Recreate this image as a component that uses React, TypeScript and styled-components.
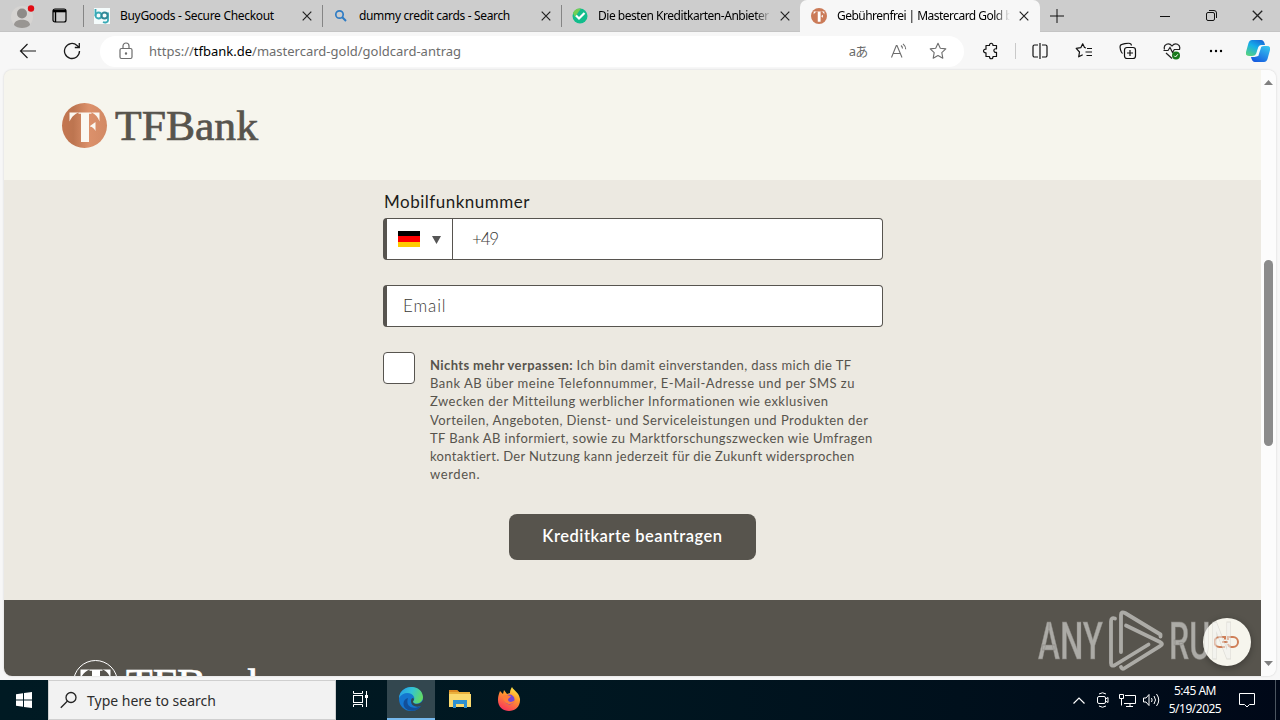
import React from "react";
import styled, { createGlobalStyle, css } from "styled-components";

const ui = `"Noto Sans", "Open Sans", "Noto Sans CJK JP", sans-serif`;
const brand = `Lato, "Open Sans", sans-serif`;

const GlobalStyle = createGlobalStyle`
    * {
        box-sizing: border-box;
    }
    body {
        margin: 0;
        overflow: hidden;
    }
    svg {
        display: block;
        flex-shrink: 0;
    }
`;

// --- Window ---
const Desktop = styled.div`
    width: 1280px;
    height: 720px;
    display: flex;
    flex-direction: column;
    overflow: hidden;
    background: #f7f7f7;
    font-family: ${ui};
    color: #1a1a1a;
`;

// --- Tab strip ---
const TabStrip = styled.div`
    height: 32px;
    flex-shrink: 0;
    display: flex;
    background: #cdcdcd;
    border-bottom: 1px solid #c4c4c4;
`;

const ProfileArea = styled.div`
    width: 83px;
    display: flex;
    align-items: center;
    gap: 16px;
    padding-left: 10px;
`;

const Tab = styled.div<{ $active?: boolean }>`
    width: 239px;
    height: 32px;
    display: flex;
    align-items: center;
    padding: 0 10px 0 10px;
    border-left: 1px solid #858585;
    border-image: linear-gradient(transparent 6px, #858585 6px, #858585 26px, transparent 26px) 1;

    ${({ $active }) =>
        $active &&
        css`
            width: 240px;
            padding-left: 11px;
            padding-right: 11px;
            background: #f7f7f7;
            border: none;
            border-radius: 7px 7px 0 0;
        `}
`;

const TabTitle = styled.span<{ $spacing: number; $fade?: boolean }>`
    flex: 1;
    margin: 0 9px 0 10px;
    overflow: hidden;
    white-space: nowrap;
    font-size: 12px;
    line-height: 20px;
    color: #000;
    letter-spacing: ${({ $spacing }) => $spacing}px;
    ${({ $fade }) => $fade && "mask-image: linear-gradient(90deg, #000 91%, transparent 100%);"}
`;

const NewTab = styled.div`
    width: 34px;
    display: flex;
    align-items: center;
    justify-content: center;
`;

const WindowButtons = styled.div`
    margin-left: auto;
    display: flex;
    align-items: center;
`;

const WindowButton = styled.div`
    width: 46px;
    display: flex;
    justify-content: center;
`;

// --- Toolbar ---
const Toolbar = styled.div`
    height: 38px;
    flex-shrink: 0;
    display: flex;
    align-items: center;
    background: #f7f7f7;
`;

const ToolButton = styled.div<{ $width?: number }>`
    width: ${({ $width = 44 }) => $width}px;
    flex-shrink: 0;
    display: flex;
    align-items: center;
    justify-content: center;
`;

const AddressBar = styled.div`
    width: 864px;
    height: 31px;
    display: flex;
    align-items: center;
    padding: 0 6px 0 17px;
    background: #fff;
    border-radius: 16px;
`;

const Url = styled.span`
    flex: 1;
    margin-left: 14px;
    font-size: 13px;
    line-height: 20px;
    color: #6d6d6d;

    b {
        font-weight: 400;
        color: #000;
    }
`;

const Translate = styled.span`
    font-size: 13px;
    font-weight: 400;
    line-height: 16px;
    letter-spacing: -1px;
    color: #6a6a6a;
`;

const Divider = styled.div`
    width: 1px;
    height: 16px;
    margin-right: 1px;
    background: #c9c9c9;
`;

// --- Page viewport ---
const Viewport = styled.div`
    height: 606px;
    flex-shrink: 0;
    margin: 0 4px;
    display: flex;
    overflow: hidden;
    border-radius: 8px;
    box-shadow: 0 0 2px #c8c8c8;
`;

const Page = styled.main`
    position: relative;
    width: 1257px;
    display: flex;
    flex-direction: column;
    background: #ece9e1;
    font-family: ${brand};
`;

const PageHeader = styled.header`
    height: 110px;
    flex-shrink: 0;
    padding: 31px 0 0 56px;
    background: #f6f5ed;
`;

const Form = styled.form`
    width: 500px;
    height: 420px;
    flex-shrink: 0;
    margin: 0 378px 0 379px;
    padding-top: 11px;
    display: flex;
    flex-direction: column;
`;

const FieldLabel = styled.label`
    height: 27px;
    padding-left: 1px;
    font-size: 17px;
    line-height: 22px;
    letter-spacing: 0.5px;
    color: #1c1c1a;
`;

const Field = styled.div`
    height: 42px;
    flex-shrink: 0;
    margin-bottom: 25px;
    display: flex;
    align-items: center;
    background: #fff;
    border: 1px solid #57544f;
    border-left-width: 4px;
    border-radius: 4px;
    font-size: 17px;
    font-weight: 300;
    color: #3a3936;
`;

const CountrySelect = styled.div`
    width: 66px;
    height: 40px;
    display: flex;
    align-items: center;
    gap: 12px;
    padding: 1px 0 0 11px;
    border-right: 1px solid #57544f;
`;

const Flag = styled.div`
    width: 22px;
    height: 16px;
    margin-bottom: 1px;
    background: linear-gradient(#000 33.3%, #f00 33.3%, #f00 66.6%, #fc0 66.6%);
`;

const Value = styled.span<{ $inset: number; $spacing: number }>`
    padding: 0 0 1px ${({ $inset }) => $inset}px;
    letter-spacing: ${({ $spacing }) => $spacing}px;
`;

const Consent = styled.div`
    display: flex;
    gap: 15px;
`;

const Checkbox = styled.div`
    width: 32px;
    height: 32px;
    flex-shrink: 0;
    background: #fff;
    border: 1px solid #57544f;
    border-radius: 4px;
`;

const ConsentText = styled.div`
    padding-top: 4px;
    color: #57544d;
`;

const ConsentLine = styled.div<{ $spacing: number }>`
    font-size: 13px;
    line-height: 18.2px;
    white-space: nowrap;
    letter-spacing: ${({ $spacing }) => $spacing}px;
`;

const SubmitButton = styled.button`
    width: 247px;
    height: 46px;
    margin: 31px 0 0 126px;
    padding: 0 0 3px;
    border: none;
    border-radius: 8px;
    background: #57544d;
    color: #fff;
    font-family: ${brand};
    font-size: 16.5px;
    font-weight: 600;
    letter-spacing: 0.5px;
`;

const PageFooter = styled.footer`
    height: 76px;
    flex-shrink: 0;
    overflow: hidden;
    padding: 58px 0 0 67px;
    background: #57544d;
`;

const ChatBubble = styled.div`
    position: absolute;
    right: 10px;
    bottom: 10px;
    width: 48px;
    height: 48px;
    display: flex;
    align-items: center;
    justify-content: center;
    border-radius: 50%;
    background: #f6f5ed;
    box-shadow: 0 2px 7px rgba(0, 0, 0, 0.3);
`;

const Watermark = styled.div`
    position: absolute;
    right: 27px;
    bottom: 3px;
`;

// --- Scrollbar ---
const Scrollbar = styled.div`
    width: 15px;
    display: flex;
    flex-direction: column;
    align-items: center;
    padding: 10px 0;
    background: #fcfcfc;
`;

const ScrollThumb = styled.div`
    width: 9px;
    height: 186px;
    margin: 175px 0 auto;
    border-radius: 5px;
    background: #8b8b8b;
`;

// --- Taskbar ---
const Taskbar = styled.div`
    height: 40px;
    flex-shrink: 0;
    margin-top: 4px;
    display: flex;
    background: linear-gradient(90deg, #001a23 0%, #001721 45%, #00101c 75%, #000818 100%);
`;

const TaskItem = styled.div<{ $active?: boolean; $width?: number }>`
    width: ${({ $width = 48 }) => $width}px;
    display: flex;
    align-items: center;
    justify-content: center;
    margin-right: 1px;
    border-bottom: 2px solid ${({ $active }) => ($active ? "#76b9ed" : "transparent")};
    background: ${({ $active }) => ($active ? "#33474f" : "transparent")};
    background-clip: padding-box;
`;

const SearchBox = styled.div`
    width: 288px;
    display: flex;
    align-items: center;
    gap: 9px;
    padding-left: 11px;
    background: #f2f2f2;
    border: 1px solid #cfcfcf;
    font-size: 14px;
    color: #2d2d2d;
`;

const StartButton = styled.div`
    width: 48px;
    display: flex;
    align-items: center;
    justify-content: center;
`;

const Tray = styled.div`
    margin-left: auto;
    display: flex;
    align-items: center;
`;

const TrayIcon = styled.div`
    width: 24px;
    display: flex;
    justify-content: center;
`;

const Clock = styled.div`
    width: 64px;
    text-align: center;
    font-size: 12px;
    line-height: 18px;
    letter-spacing: -0.5px;
    color: #fff;
`;

const ActionCenter = styled.div`
    width: 40px;
    display: flex;
    justify-content: center;
`;

const ShowDesktop = styled.div`
    width: 5px;
    height: 40px;
    margin-left: 8px;
    border-left: 1px solid #4b5560;
`;

const CloseIcon = ({ size = 10 }: { size?: number }) => (
    <svg width={size} height={size} viewBox="0 0 10 10" stroke="#222" strokeWidth="1.2">
        <path d="M.7.7l8.600 8.600M9.300.7L.7 9.300" />
    </svg>
);

// Letterform cut-out shared by the favicon and both page logos
const EmblemMark = ({ fill }: { fill: string }) => (
    <g fill={fill}>
        <path d="M8 9.500h9.500c-4.500 1.500-7 4-9.500 9z" />
        <path d="M17 9.500h13v1.200h-2.500V39h-8V10.700H17z" />
        <path d="M30 9.500h8v9c-1.500-4.500-4-7.500-8-9zM28.500 23l5.500-4v9c-1.500-2.500-3-4-5.500-4.500z" />
    </g>
);

const BankLogo = ({ inverse = false }: { inverse?: boolean }) => (
    <svg width="210" height="50" viewBox="0 0 210 50">
        <defs>
            <linearGradient id="copper" x1="0" x2="1">
                <stop offset="0" stopColor="#c47650" />
                <stop offset=".25" stopColor="#bd7550" />
                <stop offset=".6" stopColor="#dc916b" />
                <stop offset="1" stopColor="#d28964" />
            </linearGradient>
        </defs>
        {inverse ? (
            <circle cx="24.500" cy="24.500" r="22" fill="none" stroke="#fff" />
        ) : (
            <circle cx="24.500" cy="24.500" r="22.500" fill="url(#copper)" />
        )}
        <g transform="translate(1.500 2)">
            <EmblemMark fill={inverse ? "#fff" : "#fbf8f1"} />
        </g>
        <text
            x="55"
            y={inverse ? 40 : 39}
            textLength="143"
            lengthAdjust="spacingAndGlyphs"
            fontFamily="'Liberation Serif', serif"
            fontSize="41.500"
            fill={inverse ? "#fff" : "#57544d"}
            stroke={inverse ? "#fff" : "#57544d"}
            strokeWidth=".7"
        >
            TFBank
        </text>
    </svg>
);

const tabs = [
    {
        title: "BuyGoods - Secure Checkout",
        spacing: -0.31,
        icon: (
            <svg width="16" height="16" viewBox="0 0 16 16" fill="none" strokeWidth="1.800">
                <path fill="#f4fbfb" d="M0 0h16v16H0z" />
                <path stroke="#38a9b5" d="M1.500 1v7M14 4.500v8c0 2-3 2.500-5 1.500" />
                <circle cx="4.500" cy="7.500" r="3" stroke="#38a9b5" />
                <circle cx="10.500" cy="7.500" r="3" stroke="#2f8796" />
            </svg>
        ),
    },
    {
        title: "dummy credit cards - Search",
        spacing: -0.34,
        icon: (
            <svg width="16" height="16" viewBox="0 0 16 16" fill="none" stroke="#2f7cc4">
                <circle cx="6.500" cy="6.500" r="3.700" strokeWidth="1.700" />
                <path d="M9.300 9.300l3.700 3.700" strokeWidth="2" />
            </svg>
        ),
    },
    {
        title: "Die besten Kreditkarten-Anbieter",
        spacing: -0.47,
        fade: true,
        icon: (
            <svg width="16" height="16" viewBox="0 0 16 16">
                <circle cx="8" cy="8" r="7.500" fill="#12bd8c" />
                <path d="M1 5a7.500 7.500 0 0 1 8-4.500L3 9z" fill="#72cf55" />
                <path d="M4 7.500l3 3 5.500-5.500" fill="none" stroke="#fff" strokeWidth="2.200" />
            </svg>
        ),
    },
];

const consentLines = [
    { text: " Ich bin damit einverstanden, dass mich die TF", lead: "Nichts mehr verpassen:", spacing: 0.38 },
    { text: "Bank AB über meine Telefonnummer, E-Mail-Adresse und per SMS zu", spacing: 0.49 },
    { text: "Zwecken der Mitteilung werblicher Informationen wie exklusiven", spacing: 0.49 },
    { text: "Vorteilen, Angeboten, Dienst- und Serviceleistungen und Produkten der", spacing: 0.45 },
    { text: "TF Bank AB informiert, sowie zu Marktforschungszwecken wie Umfragen", spacing: 0.41 },
    { text: "kontaktiert. Der Nutzung kann jederzeit für die Zukunft widersprochen", spacing: 0.33 },
    { text: "werden.", spacing: 0.6 },
];

const BrowserTabs = () => (
    <TabStrip>
        <ProfileArea>
            <svg width="26" height="30" viewBox="0 0 26 30">
                <circle cx="12" cy="16" r="11" fill="#d6d4d2" />
                <circle cx="12" cy="12.500" r="5" fill="#8e8b88" />
                <path d="M4 24c0-7 16-7 16 0-3 4-13 4-16 0z" fill="#989592" />
                <circle cx="21" cy="7.500" r="3.200" fill="#e20b13" />
            </svg>
            <svg width="15" height="15" viewBox="0 0 15 15" fill="none" stroke="#000" strokeWidth="1.200">
                <rect x="1" y="1" width="13" height="13" rx="2" />
                <path d="M1 3h13" strokeWidth="2.600" />
                <path d="M3.500 4v10" strokeWidth="1.400" />
            </svg>
        </ProfileArea>
        {tabs.map((tab) => (
            <Tab key={tab.title}>
                {tab.icon}
                <TabTitle $spacing={tab.spacing} $fade={tab.fade}>{tab.title}</TabTitle>
                <CloseIcon />
            </Tab>
        ))}
        <Tab $active>
            <svg width="16" height="16" viewBox="2 2 45 45">
                <circle cx="24.500" cy="24.500" r="22.500" fill="#cb7b58" />
                <g transform="translate(1.500 2)"><EmblemMark fill="#fff" /></g>
            </svg>
            <TabTitle $spacing={-0.53} $fade>Gebührenfrei | Mastercard Gold b</TabTitle>
            <CloseIcon />
        </Tab>
        <NewTab>
            <svg width="14" height="14" viewBox="0 0 14 14" stroke="#111"><path d="M7 0v14M0 7h14" /></svg>
        </NewTab>
        <WindowButtons>
            <WindowButton>
                <svg width="10" height="10" viewBox="0 0 10 10" stroke="#111"><path d="M0 5.500h10" /></svg>
            </WindowButton>
            <WindowButton>
                <svg width="11" height="11" viewBox="0 0 11 11" fill="none" stroke="#111">
                    <rect x=".5" y="2.500" width="8" height="8" rx="1.500" />
                    <path d="M3 .5h5a2.500 2.500 0 0 1 2.500 2.500v5" />
                </svg>
            </WindowButton>
            <WindowButton><CloseIcon size={11} /></WindowButton>
        </WindowButtons>
    </TabStrip>
);

const BrowserToolbar = () => (
    <Toolbar>
        <ToolButton $width={56}>
            <svg width="18" height="16" viewBox="0 0 18 16" fill="none" stroke="#1b1b1b" strokeWidth="1.200">
                <path d="M17 8H1.500M8.500 1L1.500 8l7 7" />
            </svg>
        </ToolButton>
        <ToolButton $width={32}>
            <svg width="18" height="18" viewBox="0 0 18 18" fill="none" stroke="#1b1b1b" strokeWidth="1.300">
                <path d="M16.500 9a7.500 7.500 0 1 1-2.500-5.600L16 5.300M16.300 1v4.500h-4.500" />
            </svg>
        </ToolButton>
        <ToolButton $width={12} />
        <AddressBar>
            <svg width="18" height="18" viewBox="0 0 18 18" fill="none" stroke="#6d6d6d" strokeWidth="1.200">
                <rect x="3" y="6.500" width="12" height="10" rx="1.500" />
                <path d="M6 6.500V4a3 3 0 0 1 6 0v2.500" />
                <circle cx="9" cy="11.500" r=".6" fill="#6d6d6d" />
            </svg>
            <Url>https://<b>tfbank.de</b>/mastercard-gold/goldcard-antrag</Url>
            <ToolButton $width={40}><Translate>aあ</Translate></ToolButton>
            <ToolButton $width={40}>
                <svg width="18" height="16" viewBox="0 0 18 16" fill="none" stroke="#6d6d6d" strokeWidth="1.100">
                    <path d="M2.500 14.500L7.300 2.500h.7l5 12M4.200 10.500h7M12 2.500c1 .8 1.500 1.800 1.500 3M14 .8c1.800 1.500 2.700 3.300 2.700 5.500" />
                </svg>
            </ToolButton>
            <ToolButton $width={40}>
                <svg width="18" height="18" viewBox="0 0 18 18" fill="none" stroke="#6d6d6d" strokeWidth="1.100" strokeLinejoin="round">
                    <path d="M9 1.200l2.300 5 5.500.7-4 3.800 1 5.500L9 13.500l-4.800 2.700 1-5.500-4-3.800 5.500-.7z" />
                </svg>
            </ToolButton>
        </AddressBar>
        <ToolButton $width={51}>
            <svg width="18" height="18" viewBox="-2 0 18 18" fill="none" stroke="#111" strokeWidth="1.200" strokeLinejoin="round">
                <path d="M4 3.500h2.500c-.3-3 3.700-3 3.500 0h3.500v3.300c-3.500-.7-3.500 4.200 0 3.500v4.200H10c0 3-3.500 3-3.500 0H3v-3.700c-3.300.3-3.300-4 0-3.700V3.500z" />
            </svg>
        </ToolButton>
        <Divider />
        <ToolButton $width={45}>
            <svg width="16" height="16" viewBox="0 0 16 16" fill="none" stroke="#111" strokeWidth="1.200">
                <path d="M6 2H2.500A1.500 1.500 0 0 0 1 3.500v9A1.500 1.500 0 0 0 2.500 14H6M10 2h3.500A1.500 1.500 0 0 1 15 3.500v9a1.500 1.500 0 0 1-1.500 1.500H10M8 0v16" />
            </svg>
        </ToolButton>
        <ToolButton>
            <svg width="18" height="18" viewBox="0 0 18 18" fill="none" stroke="#111" strokeWidth="1.200" strokeLinejoin="round">
                <path d="M11 6L9.500 5.500 7.700 1.800 5.800 5.700l-4.600.7L4.500 10l-.8 4.800 4-2.100M12 6.500h5M10.500 10h6.500M11.500 13.500H17" />
            </svg>
        </ToolButton>
        <ToolButton>
            <svg width="18" height="18" viewBox="0 0 18 18" fill="none" stroke="#111" strokeWidth="1.200">
                <rect x="5.500" y="5.500" width="11" height="11" rx="2.500" />
                <path d="M11 8v6M8 11h6M3.500 11.500C1.800 10.500.5 5 1.300 3.500S9.500.8 11 1.500s1.300 1.300 1.500 2" />
            </svg>
        </ToolButton>
        <ToolButton>
            <svg width="18" height="18" viewBox="0 0 18 18" fill="none" stroke="#222" strokeWidth="1.200">
                <path d="M1.500 7.500C0 2 6 0 9 4c3-4 9-2 7.500 3.500M.5 8.500H5l2-3 2.500 5 1.800-3H17M3 11l6 5.500" />
                <circle cx="13" cy="13.500" r="4" fill="#18791c" stroke="none" />
                <path d="M11.200 13.700l1.300 1.300 2.300-2.700" stroke="#fff" strokeWidth="1" />
            </svg>
        </ToolButton>
        <ToolButton>
            <svg width="16" height="4" viewBox="0 0 16 4">
                <circle cx="3" cy="2" r="1.200" /><circle cx="8" cy="2" r="1.200" /><circle cx="13" cy="2" r="1.200" />
            </svg>
        </ToolButton>
        <ToolButton $width={40}>
            <svg width="24" height="22" viewBox="0 0 24 22">
                <defs>
                    <linearGradient id="copilotLeft" x1=".8" y1="0" x2=".2" y2="1">
                        <stop offset="0" stopColor="#1768d7" /><stop offset=".45" stopColor="#16aeea" /><stop offset="1" stopColor="#56d282" />
                    </linearGradient>
                    <linearGradient id="copilotRight" x1=".8" y1="0" x2=".2" y2="1">
                        <stop offset="0" stopColor="#35c3ef" /><stop offset="1" stopColor="#1458df" />
                    </linearGradient>
                </defs>
                <path d="M6 0h9q3 0 4 5h-4q-2 0-3 3l-2 6q-1 2-4 2H3q-4 0-3-4L2.500 3Q3.500 0 6 0z" fill="url(#copilotLeft)" />
                <path d="M18 22H9q-3 0-4-5h4q2 0 3-3l2-6q1-2 4-2h3q4 0 3 4l-2.500 9q-1 3-3.500 3z" fill="url(#copilotRight)" />
                <path d="M10 16.500l2.800-10 2.700-.5-3.200 10z" fill="#f4fbff" />
            </svg>
        </ToolButton>
    </Toolbar>
);

const ApplicationForm = () => (
    <Form>
        <FieldLabel>Mobilfunknummer</FieldLabel>
        <Field>
            <CountrySelect>
                <Flag />
                <svg width="9" height="8" viewBox="0 0 9 8"><path d="M0 0h9L4.500 8z" fill="#555" /></svg>
            </CountrySelect>
            <Value $inset={19} $spacing={-1.2}>+49</Value>
        </Field>
        <Field>
            <Value $inset={16} $spacing={0.9}>Email</Value>
        </Field>
        <Consent>
            <Checkbox />
            <ConsentText>
                {consentLines.map(({ text, lead, spacing }) => (
                    <ConsentLine key={text} $spacing={spacing}>
                        {lead && <b>{lead}</b>}
                        {text}
                    </ConsentLine>
                ))}
            </ConsentText>
        </Consent>
        <SubmitButton type="button">Kreditkarte beantragen</SubmitButton>
    </Form>
);

const AnyRunMark = () => (
    <svg width="198" height="64" viewBox="1037 609 198 64" opacity=".55">
        <g
            fill="#f2f2f0"
            stroke="#a8a6a0"
            strokeOpacity=".55"
            strokeWidth=".9"
            fontFamily="Roboto, sans-serif"
            fontSize="52"
            fontWeight="500"
        >
            <text x="1039" y="659" textLength="65" lengthAdjust="spacingAndGlyphs">ANY</text>
            <text x="1170" y="659" textLength="64" lengthAdjust="spacingAndGlyphs">RUN</text>
        </g>
        <g fill="none" stroke="#f2f2f0" strokeWidth="3.800" strokeLinecap="round" strokeLinejoin="round">
            <path d="M1116 618.500q-4-1.500-4 3v41.500q0 4 4 2l33.500-20.500" />
            <path d="M1122 652v-37q0-4 4-2l35.500 21.500v2" />
            <path d="M1127 625.500l34 16.500q4 2 0 4.200l-36 22.300q-2 1-3-1.500" />
        </g>
    </svg>
);

const SystemTray = () => (
    <Tray>
        <TrayIcon>
            <svg width="12" height="7" viewBox="0 0 12 7" fill="none" stroke="#fff" strokeWidth="1.200"><path d="M.5 6.500L6 1l5.500 5.500" /></svg>
        </TrayIcon>
        <TrayIcon>
            <svg width="14" height="18" viewBox="0 0 14 18" fill="none" stroke="#fff">
                <rect x="1.500" y="5.500" width="8" height="7" rx="1.500" />
                <path d="M9.500 8l2.500-1.500v5L9.500 10M3 3q3.500-2.500 7 0M3 15q3.500 2.500 7 0" />
            </svg>
        </TrayIcon>
        <TrayIcon>
            <svg width="17" height="15" viewBox="0 0 17 15" fill="none" stroke="#fff">
                <path d="M6 2.500h10.500v8H5M.5 1.500h4v4h-4zM2.500 5.500v7M11 10.500v3M7 13.500h7" />
            </svg>
        </TrayIcon>
        <TrayIcon>
            <svg width="17" height="14" viewBox="0 0 17 14" fill="none" stroke="#fff">
                <path d="M.5 5h2.500l3-3.500v11L3 9H.5zM8.500 5q1.300 2 0 4M11 3q3 4 0 8M13.500 1q4.500 6 0 12" />
            </svg>
        </TrayIcon>
        <Clock>
            5:45 AM
            <br />
            5/19/2025
        </Clock>
        <ActionCenter>
            <svg width="16" height="16" viewBox="0 0 16 16" fill="none" stroke="#fff"><path d="M.5 1.500h15v11h-5L8 15l-2.500-2.500h-5z" /></svg>
        </ActionCenter>
        <ShowDesktop />
    </Tray>
);

const WindowsTaskbar = () => (
    <Taskbar>
        <StartButton>
            <svg width="16" height="16" viewBox="0 0 16 16" fill="#fff">
                <path d="M0 2.300L7 1.300v6.200H0zM8 1.100L16 0v7.500H8zM0 8.500h7v6.200L0 13.700zM8 8.500h8V16l-8-1.100z" />
            </svg>
        </StartButton>
        <SearchBox>
            <svg width="18" height="18" viewBox="0 0 18 18" fill="none" stroke="#222" strokeWidth="1.300">
                <circle cx="11" cy="6.500" r="5" /><path d="M7.500 10L.8 16.700" />
            </svg>
            Type here to search
        </SearchBox>
        <TaskItem $width={50}>
            <svg width="17" height="16" viewBox="1 0 17 16" fill="none" stroke="#fff">
                <rect x="1.500" y="4.500" width="9" height="7" />
                <path d="M1.500 0v2.500h9V0M1.500 16v-2.500h9V16M14.500 0v16" />
                <path d="M13 4h3v3h-3z" fill="#fff" stroke="none" />
            </svg>
        </TaskItem>
        <TaskItem $active>
            <svg width="24" height="24" viewBox="0 0 24 24">
                <defs>
                    <linearGradient id="edgeTop" x1="0" x2="1" y1=".2" y2=".5">
                        <stop offset="0" stopColor="#259ee7" /><stop offset=".5" stopColor="#33c3d4" /><stop offset="1" stopColor="#63db61" />
                    </linearGradient>
                </defs>
                <circle cx="12" cy="12" r="12" fill="#1476cf" />
                <path d="M0 11C1-3 23-4 24 10c0 7-9 8-10 5 0-1 2-2 1-5C13 5 4 4 0 11z" fill="url(#edgeTop)" />
                <path d="M9 11c-3 9 5 12 13 8-4 6-10 5-13 4-7-3-5-11 0-12z" fill="#124f99" />
                <path d="M14 15c1 3 8 3 10-2v5c-5 3-12 2-12-4 0-2 1-3 2-3 2 1 0 3 0 4z" fill="#33474f" />
            </svg>
        </TaskItem>
        <TaskItem>
            <svg width="22" height="20" viewBox="0 0 22 20">
                <path d="M0 1h8l2 2h11v15H0z" fill="#eab13d" />
                <path d="M0 5h22v13H0z" fill="#fbd96e" />
                <path d="M4 11h14v8h-3v-4H7v4H4z" fill="#2f91d0" />
                <path d="M0 1h8l2 2H0z" fill="#dd8b24" />
            </svg>
        </TaskItem>
        <TaskItem>
            <svg width="24" height="24" viewBox="0 0 24 24">
                <defs>
                    <linearGradient id="fox" x1=".8" x2=".3" y1="0" y2="1">
                        <stop offset="0" stopColor="#fff24a" /><stop offset=".4" stopColor="#ff9a2c" /><stop offset="1" stopColor="#f9325d" />
                    </linearGradient>
                </defs>
                <path d="M3 4l3 3 1-4 3 4 3-1c0-3 1-4 2-6 2 4 7 5 8 12 1 16-23 16-22 0 0-3 1-5 2-8z" fill="url(#fox)" />
                <circle cx="12.500" cy="12.500" r="5" fill="#7446d5" />
                <path d="M6 9c3-2 5 0 8 0-1 2-3 2-3 4 1 3 5 2 7 0-1 6-12 6-12-4z" fill="#ff7e38" />
            </svg>
        </TaskItem>
        <SystemTray />
    </Taskbar>
);

const App: React.FC = () => (
    <Desktop>
        <GlobalStyle />
        <BrowserTabs />
        <BrowserToolbar />
        <Viewport>
            <Page>
                <PageHeader><BankLogo /></PageHeader>
                <ApplicationForm />
                <PageFooter><BankLogo inverse /></PageFooter>
                <ChatBubble>
                    <svg width="26" height="14" viewBox="0 0 26 14" fill="none" stroke="#cf7f58" strokeWidth="2">
                        <path d="M11 4.500V2H5.500a5 5 0 0 0 0 10H11" />
                        <path d="M8 7h6M14 5V2h5a5 5 0 0 1 0 10h-2a4 4 0 0 1-3-3" />
                    </svg>
                </ChatBubble>
                <Watermark><AnyRunMark /></Watermark>
            </Page>
            <Scrollbar>
                <svg width="9" height="5" viewBox="0 0 9 5"><path d="M0 5l4.500-5L9 5z" fill="#7f7f7f" /></svg>
                <ScrollThumb />
                <svg width="9" height="5" viewBox="0 0 9 5"><path d="M0 0l4.500 5L9 0z" fill="#7f7f7f" /></svg>
            </Scrollbar>
        </Viewport>
        <WindowsTaskbar />
    </Desktop>
);

export default App;
